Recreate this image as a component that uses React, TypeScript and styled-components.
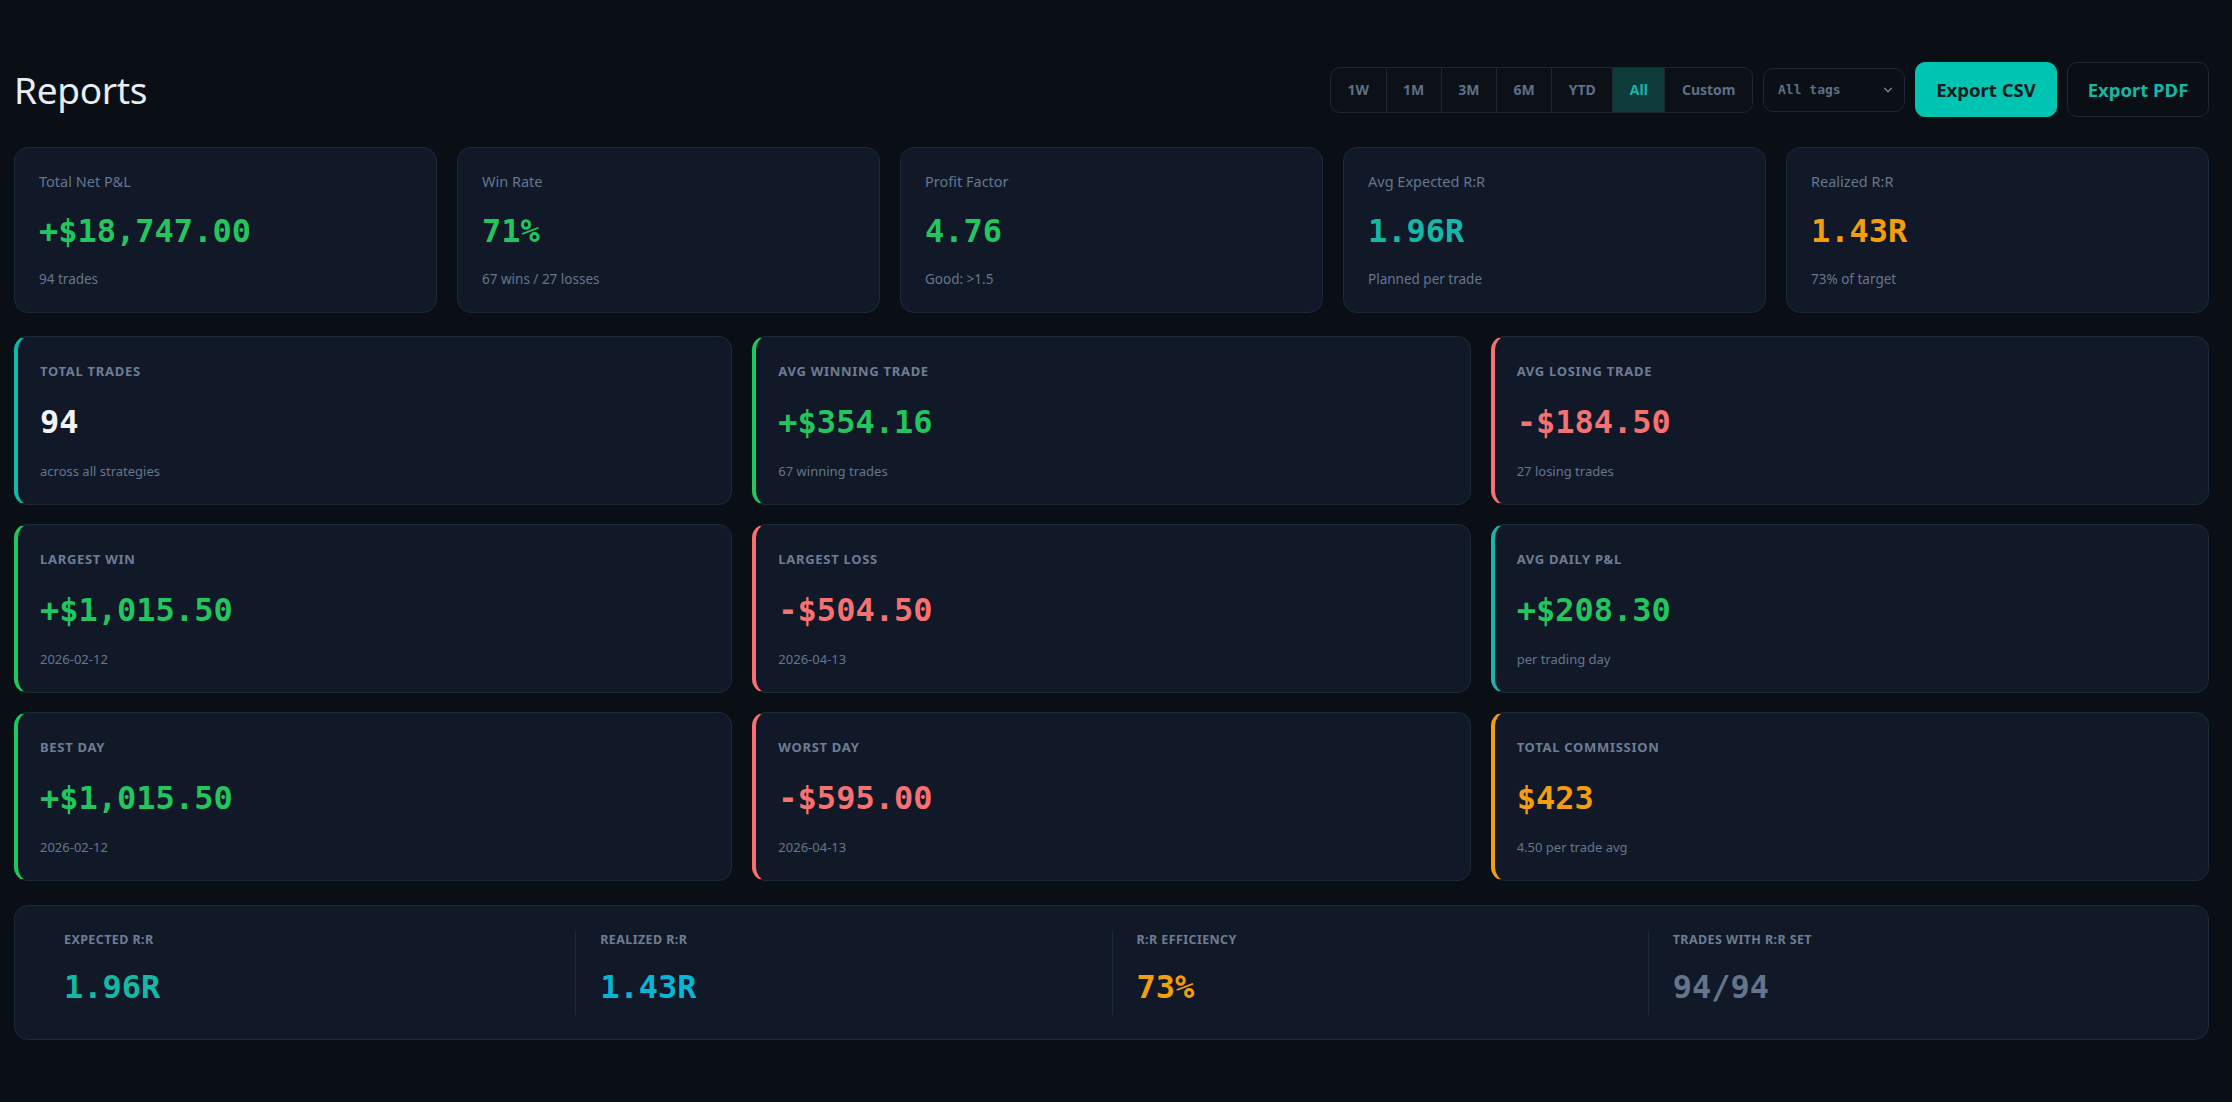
import styled, { createGlobalStyle } from 'styled-components';

const GlobalStyle = createGlobalStyle`
	* {
		box-sizing: border-box;
	}
	html,
	body {
		margin: 0;
		background: #0a0e15;
		color: #e2e8f0;
		font-family: 'Noto Sans', 'Open Sans', sans-serif;
	}
`;

const SANS = `'Noto Sans', 'Open Sans', sans-serif`;
const MONO = `'DejaVu Sans Mono', 'Liberation Mono', monospace`;

const colors = {
	green: '#22c55e',
	red: '#f87171',
	teal: '#14b8a6',
	cyan: '#06b6d4',
	amber: '#f59e0b',
	white: '#f1f5f9',
	muted: '#64748b',
};

type Tone = keyof typeof colors;

const Page = styled.main`
	min-height: 1102px;
	padding: 62px 23px 40px 14px;
`;

const Header = styled.header`
	display: flex;
	align-items: center;
	justify-content: space-between;
	height: 55px;
	margin-bottom: 30px;
`;

const Title = styled.h1`
	margin: 0;
	font-family: ${SANS};
	font-size: 37px;
	font-weight: 400;
	color: #e8edf4;
	letter-spacing: -0.3px;
`;

const Controls = styled.div`
	display: flex;
	align-items: center;
	gap: 10px;
`;

const Range = styled.div`
	display: flex;
	height: 46px;
	border: 1px solid #1c2834;
	border-radius: 10px;
	overflow: hidden;
	background: #0c1118;
`;

const RangeButton = styled.button<{ $active?: boolean }>`
	border: 0;
	border-left: 1px solid #1c2834;
	padding: 0 16.5px;
	font-family: ${SANS};
	font-size: 14px;
	font-weight: 700;
	color: ${({ $active }) => ($active ? colors.teal : '#5f6f86')};
	background: ${({ $active }) => ($active ? '#0d3b3a' : 'transparent')};

	&:first-child {
		border-left: 0;
	}
`;

const Select = styled.div`
	display: flex;
	align-items: center;
	justify-content: space-between;
	width: 142px;
	height: 44px;
	padding: 0 9px 0 14px;
	border: 1px solid #1c2834;
	border-radius: 10px;
	background: #0b0f16;
	font-family: ${MONO};
	font-size: 13px;
	font-weight: 700;
	color: #5f6f86;
`;

const ExportButton = styled.button<{ $primary?: boolean }>`
	width: 142px;
	height: 55px;
	border-radius: 10px;
	border: 1px solid ${({ $primary }) => ($primary ? '#00c4b2' : '#1c2834')};
	background: ${({ $primary }) => ($primary ? '#00c4b2' : 'transparent')};
	color: ${({ $primary }) => ($primary ? '#0b1a1c' : colors.teal)};
	font-family: ${SANS};
	font-size: 18.5px;
	font-weight: 700;
`;

const SummaryRow = styled.section`
	display: grid;
	grid-template-columns: repeat(5, 1fr);
	gap: 20px;
	margin-bottom: 23px;
`;

const Card = styled.div`
	background: #111827;
	border: 1px solid #1b2a37;
	border-radius: 14px;
`;

const SummaryCard = styled(Card)`
	display: flex;
	flex-direction: column;
	padding: 22px 24px 25px;
	height: 166px;
`;

const SummaryLabel = styled.span`
	font-family: ${SANS};
	font-size: 14.5px;
	line-height: 22px;
	color: #66768d;
`;

const Value = styled.span<{ $tone: Tone }>`
	font-family: ${MONO};
	font-size: 32px;
	font-weight: 700;
	line-height: 40px;
	color: ${({ $tone }) => colors[$tone]};
`;

const SummaryValue = styled(Value)`
	margin: 19px 0 18px;
`;

const Note = styled.span`
	font-family: ${SANS};
	font-size: 13.5px;
	line-height: 20px;
	color: #66768d;
`;

const StatGrid = styled.section`
	display: grid;
	grid-template-columns: repeat(3, 1fr);
	gap: 19px 20px;
	margin-bottom: 24px;
`;

const StatCard = styled(Card)<{ $accent: Tone }>`
	display: flex;
	flex-direction: column;
	height: 169px;
	padding: 24px 22px 25px;
	border-left: 4px solid ${({ $accent }) => colors[$accent]};
`;

const Caps = styled.span`
	font-family: ${SANS};
	font-size: 13px;
	font-weight: 700;
	line-height: 20px;
	letter-spacing: 0.7px;
	text-transform: uppercase;
	color: #6e7d94;
`;

const StatValue = styled(Value)`
	margin: 21px 0 20px;
`;

const SmallNote = styled(Note)`
	font-size: 13px;
	line-height: 18px;
`;

const RatioPanel = styled(Card)`
	display: grid;
	grid-template-columns: repeat(4, 1fr);
	height: 135px;
	padding: 25px 24px 24px;
`;

const RatioCell = styled.div`
	display: flex;
	flex-direction: column;
	padding: 0 24px 7px;
	border-left: 1px solid #1e2b38;

	&:first-child {
		border-left-color: transparent;
	}
`;

const RatioLabel = styled(Caps)`
	font-size: 12.5px;
	line-height: 18px;
	letter-spacing: 0.4px;
`;

const RatioValue = styled(Value)`
	margin-top: 18px;
`;

const ranges = ['1W', '1M', '3M', '6M', 'YTD', 'All', 'Custom'];

const summary: { label: string; value: string; tone: Tone; note: string }[] = [
	{ label: 'Total Net P&L', value: '+$18,747.00', tone: 'green', note: '94 trades' },
	{ label: 'Win Rate', value: '71%', tone: 'green', note: '67 wins / 27 losses' },
	{ label: 'Profit Factor', value: '4.76', tone: 'green', note: 'Good: >1.5' },
	{ label: 'Avg Expected R:R', value: '1.96R', tone: 'teal', note: 'Planned per trade' },
	{ label: 'Realized R:R', value: '1.43R', tone: 'amber', note: '73% of target' },
];

const stats: { label: string; value: string; tone: Tone; accent: Tone; note: string }[] = [
	{ label: 'Total Trades', value: '94', tone: 'white', accent: 'teal', note: 'across all strategies' },
	{ label: 'Avg Winning Trade', value: '+$354.16', tone: 'green', accent: 'green', note: '67 winning trades' },
	{ label: 'Avg Losing Trade', value: '-$184.50', tone: 'red', accent: 'red', note: '27 losing trades' },
	{ label: 'Largest Win', value: '+$1,015.50', tone: 'green', accent: 'green', note: '2026-02-12' },
	{ label: 'Largest Loss', value: '-$504.50', tone: 'red', accent: 'red', note: '2026-04-13' },
	{ label: 'Avg Daily P&L', value: '+$208.30', tone: 'green', accent: 'teal', note: 'per trading day' },
	{ label: 'Best Day', value: '+$1,015.50', tone: 'green', accent: 'green', note: '2026-02-12' },
	{ label: 'Worst Day', value: '-$595.00', tone: 'red', accent: 'red', note: '2026-04-13' },
	{ label: 'Total Commission', value: '$423', tone: 'amber', accent: 'amber', note: '4.50 per trade avg' },
];

const ratios: { label: string; value: string; tone: Tone }[] = [
	{ label: 'Expected R:R', value: '1.96R', tone: 'teal' },
	{ label: 'Realized R:R', value: '1.43R', tone: 'cyan' },
	{ label: 'R:R Efficiency', value: '73%', tone: 'amber' },
	{ label: 'Trades with R:R set', value: '94/94', tone: 'muted' },
];

const Chevron = () => (
	<svg width='14' height='14' viewBox='0 0 24 24' fill='none' stroke='#7a879a' strokeWidth='2.2' strokeLinecap='round' strokeLinejoin='round'>
		<path d='M6 9l6 6 6-6' />
	</svg>
);

const App = () => {
	return (
		<Page>
			<GlobalStyle />
			<Header>
				<Title>Reports</Title>
				<Controls>
					<Range>
						{ranges.map((r) => (
							<RangeButton key={r} $active={r === 'All'}>
								{r}
							</RangeButton>
						))}
					</Range>
					<Select>
						<span>All tags</span>
						<Chevron />
					</Select>
					<ExportButton $primary>Export CSV</ExportButton>
					<ExportButton>Export PDF</ExportButton>
				</Controls>
			</Header>

			<SummaryRow>
				{summary.map((s) => (
					<SummaryCard key={s.label}>
						<SummaryLabel>{s.label}</SummaryLabel>
						<SummaryValue $tone={s.tone}>{s.value}</SummaryValue>
						<Note>{s.note}</Note>
					</SummaryCard>
				))}
			</SummaryRow>

			<StatGrid>
				{stats.map((s) => (
					<StatCard key={s.label} $accent={s.accent}>
						<Caps>{s.label}</Caps>
						<StatValue $tone={s.tone}>{s.value}</StatValue>
						<SmallNote>{s.note}</SmallNote>
					</StatCard>
				))}
			</StatGrid>

			<RatioPanel>
				{ratios.map((r) => (
					<RatioCell key={r.label}>
						<RatioLabel>{r.label}</RatioLabel>
						<RatioValue $tone={r.tone}>{r.value}</RatioValue>
					</RatioCell>
				))}
			</RatioPanel>
		</Page>
	);
};

export default App;
